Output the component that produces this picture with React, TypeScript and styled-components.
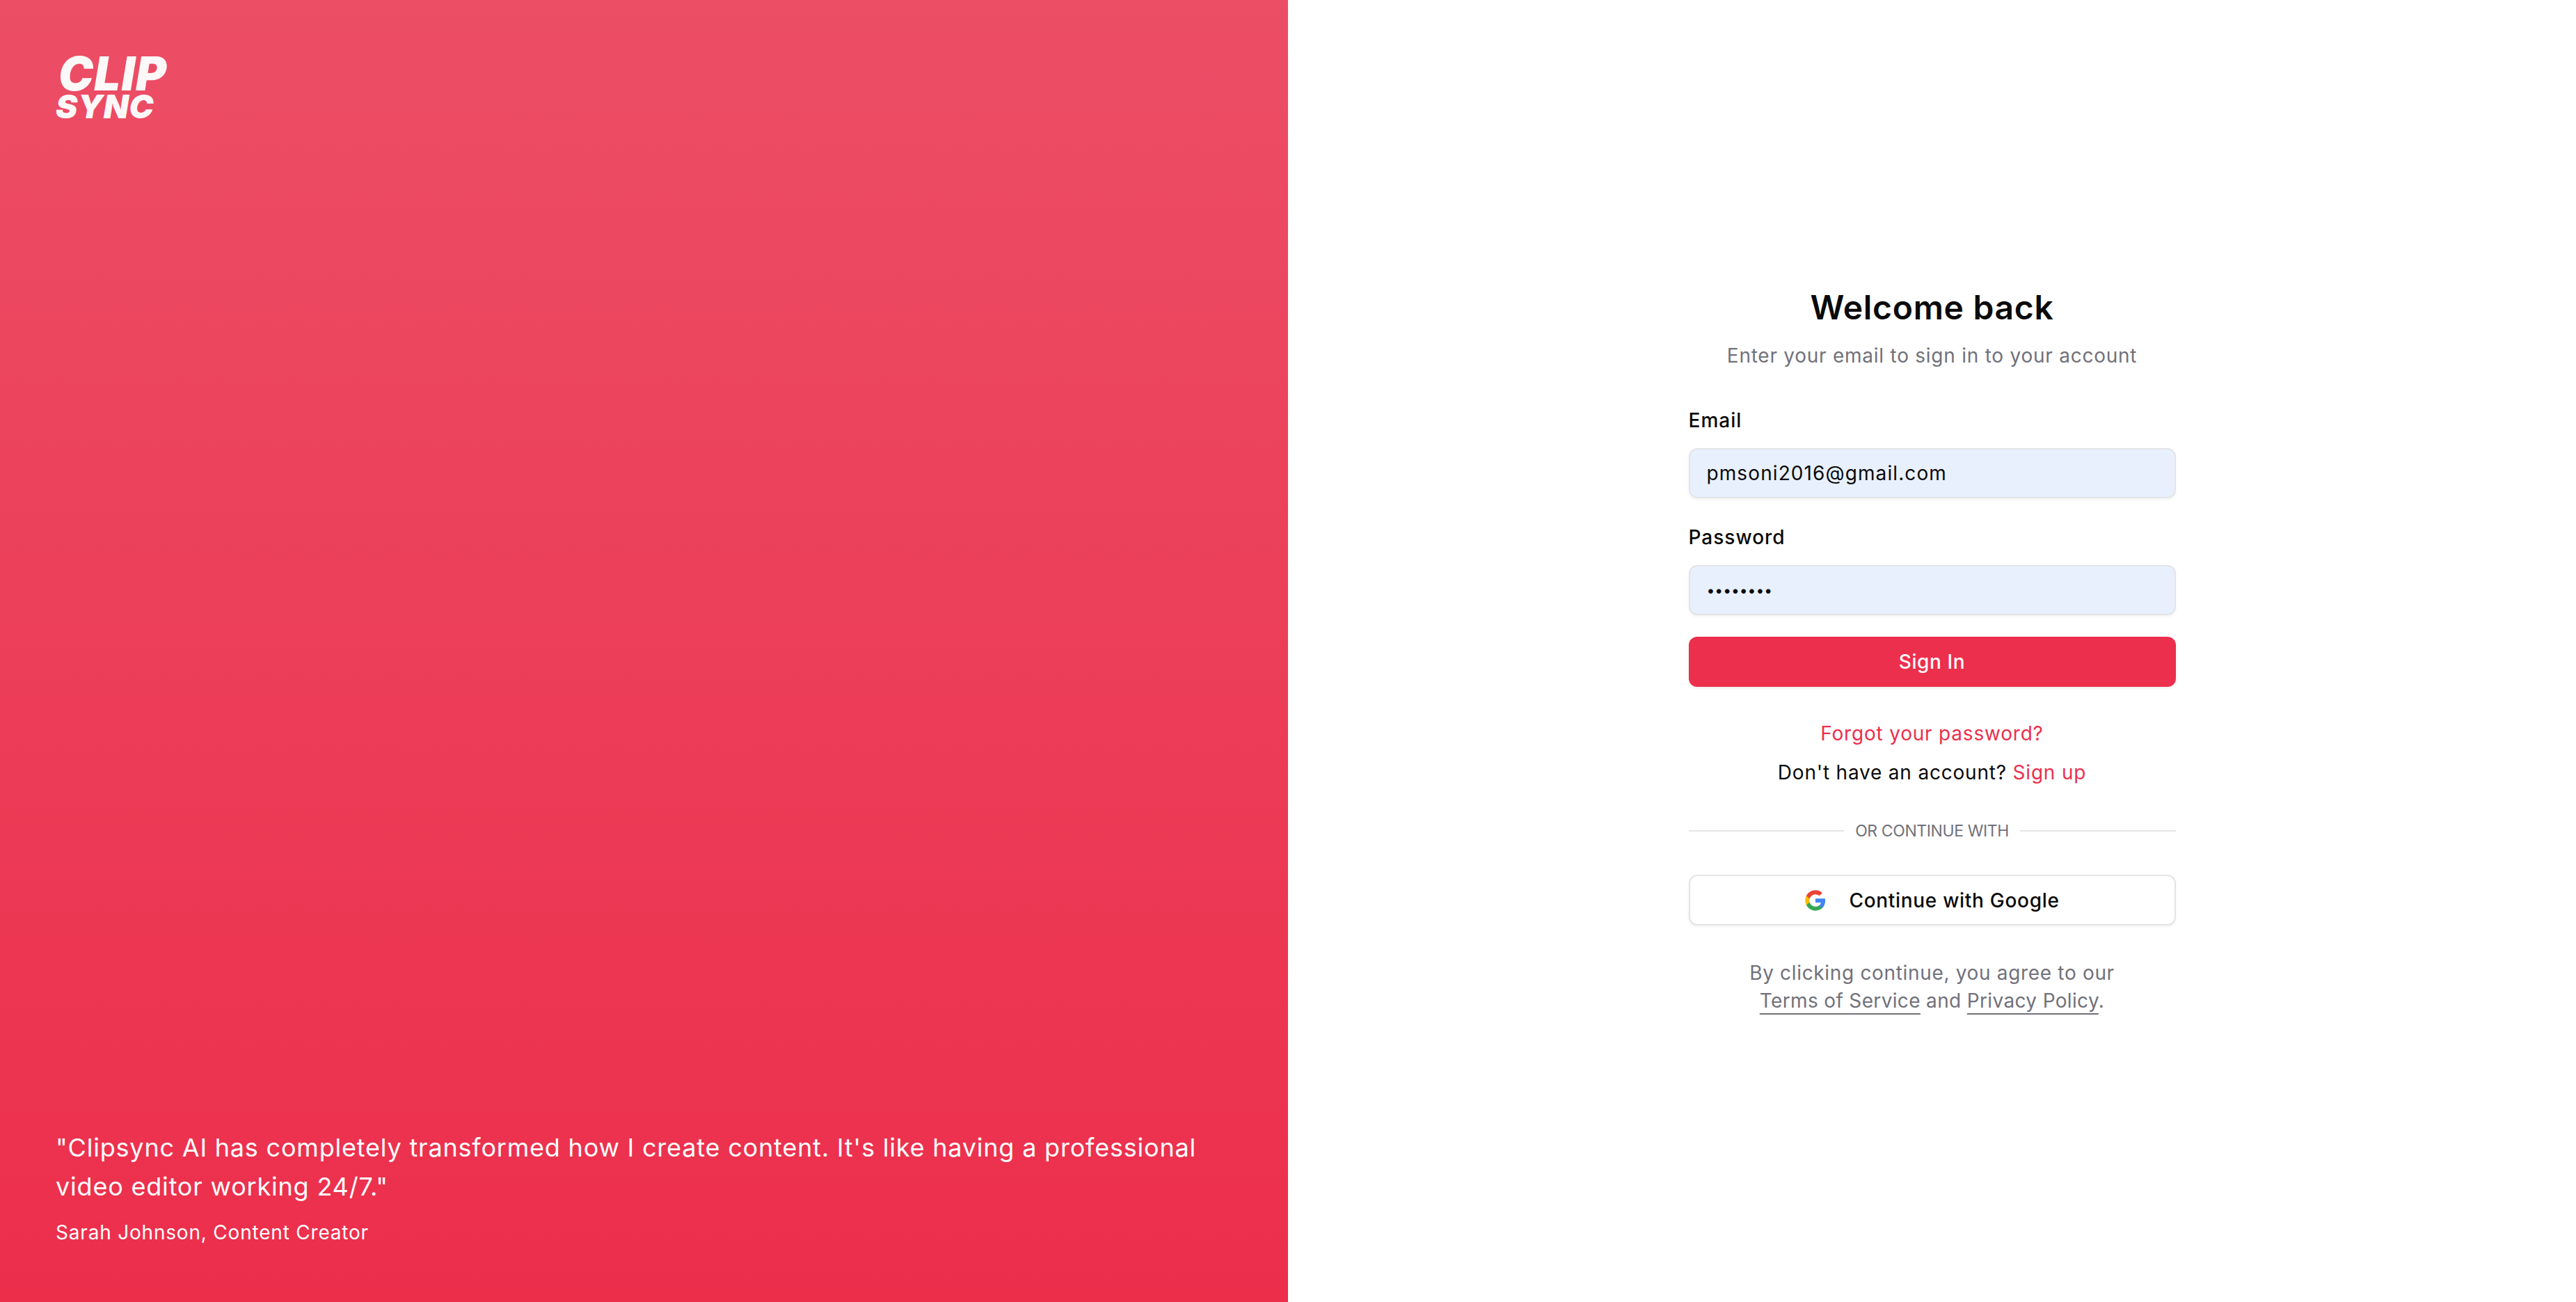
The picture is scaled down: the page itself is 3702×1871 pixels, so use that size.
import styled, { createGlobalStyle } from 'styled-components';

const FONT = `'Inter', 'Noto Sans', sans-serif`;
const RED = '#ec2f4c';
const GREY = '#71717a';

const GlobalStyle = createGlobalStyle`
  html, body {
    margin: 0;
    padding: 0;
    background: #fff;
  }
  * {
    box-sizing: border-box;
  }
`;

const Page = styled.main`
  display: grid;
  grid-template-columns: 1851px 1851px;
  width: 3702px;
  height: 1871px;
  font-family: ${FONT};
`;

const Hero = styled.section`
  display: flex;
  flex-direction: column;
  justify-content: space-between;
  padding: 81px 80px 80px;
  background: linear-gradient(180deg, #ec4e66 0%, #ec2e4b 100%);
  color: #fff;
`;

const Logo = styled.div`
  display: flex;
  flex-direction: column;
  gap: 2px;
  width: 170px;
  font-weight: 900;
  font-style: italic;
  color: #fcf8f8;
`;

const LogoTop = styled.span`
  padding-left: 4px;
  font-size: 67px;
  line-height: 50px;
  letter-spacing: 1.2px;
`;

const LogoBottom = styled.span`
  font-size: 47px;
  line-height: 40px;
  letter-spacing: 0.5px;
`;

const Testimonial = styled.blockquote`
  display: flex;
  flex-direction: column;
  gap: 18px;
  margin: 0;
`;

const Quote = styled.p`
  margin: 0;
  font-size: 36px;
  line-height: 56px;
  letter-spacing: 0.8px;
`;

const Author = styled.footer`
  font-size: 28px;
  line-height: 40px;
  letter-spacing: 0.8px;
`;

const Side = styled.section`
  display: flex;
  justify-content: center;
  padding-top: 410px;
`;

const Form = styled.form`
  display: flex;
  flex-direction: column;
  width: 700px;
`;

const Title = styled.h1`
  margin: 0;
  font-size: 48px;
  line-height: 64px;
  font-weight: 600;
  letter-spacing: 0.7px;
  text-align: center;
  color: #0a0a0a;
`;

const Subtitle = styled.p`
  margin: 17px 0 0;
  font-size: 28px;
  line-height: 40px;
  letter-spacing: 0.75px;
  text-align: center;
  color: ${GREY};
`;

const Field = styled.div<{ $top: number }>`
  display: flex;
  flex-direction: column;
  gap: 26px;
  margin-top: ${({ $top }) => $top}px;
`;

const Label = styled.label`
  font-size: 28px;
  line-height: 28px;
  font-weight: 500;
  letter-spacing: 1px;
  color: #0a0a0a;
`;

const Input = styled.input<{ $masked?: boolean }>`
  height: 72px;
  padding: 0 24px;
  border: 2px solid #e4e4e7;
  border-radius: 12px;
  background: #e8f0fe;
  box-shadow: 0 2px 4px rgba(0, 0, 0, 0.05);
  font-family: ${FONT};
  font-size: ${({ $masked }) => ($masked ? '21px' : '28px')};
  letter-spacing: ${({ $masked }) => ($masked ? '0' : '1.1px')};
  color: #0a0a0a;
  outline: none;
`;

const Submit = styled.button`
  height: 72px;
  margin-top: 31px;
  border: 0;
  border-radius: 12px;
  background: ${RED};
  box-shadow: 0 2px 4px rgba(0, 0, 0, 0.08);
  font-family: ${FONT};
  font-size: 28px;
  font-weight: 500;
  letter-spacing: 0.6px;
  color: #fcfcfc;
`;

const Links = styled.div`
  display: flex;
  flex-direction: column;
  gap: 16px;
  margin-top: 47px;
  font-size: 28px;
  line-height: 40px;
  letter-spacing: 0.8px;
  text-align: center;
  color: #0a0a0a;
`;

const RedLink = styled.a`
  color: ${RED};
`;

const Divider = styled.div`
  display: flex;
  align-items: center;
  gap: 16px;
  margin-top: 48px;
  font-size: 23px;
  line-height: 32px;
  letter-spacing: -0.4px;
  color: ${GREY};

  &::before,
  &::after {
    content: '';
    flex: 1;
    height: 2px;
    background: #e4e4e7;
  }
`;

const GoogleButton = styled.button`
  display: flex;
  align-items: center;
  justify-content: center;
  gap: 32px;
  height: 73px;
  margin-top: 47px;
  border: 2px solid #e4e4e7;
  border-radius: 12px;
  background: #fff;
  box-shadow: 0 2px 4px rgba(0, 0, 0, 0.05);
  font-family: ${FONT};
  font-size: 28px;
  font-weight: 500;
  letter-spacing: 0.7px;
  color: #0a0a0a;
`;

const GoogleMark = styled.svg`
  width: 32px;
  height: 32px;
`;

const Legal = styled.p`
  margin: 48px 0 0;
  font-size: 28px;
  line-height: 40px;
  letter-spacing: 0.67px;
  text-align: center;
  color: ${GREY};
`;

const LegalRow = styled.span`
  letter-spacing: 0.35px;
`;

const LegalLink = styled.a`
  color: ${GREY};
  text-decoration: underline;
  text-underline-offset: 8px;
  text-decoration-thickness: 2px;
`;

export default function App() {
  return (
    <Page>
      <GlobalStyle />
      <Hero>
        <Logo>
          <LogoTop>CLIP</LogoTop>
          <LogoBottom>SYNC</LogoBottom>
        </Logo>
        <Testimonial>
          <Quote>
            "Clipsync AI has completely transformed how I create content. It's like having a professional video editor
            working 24/7."
          </Quote>
          <Author>Sarah Johnson, Content Creator</Author>
        </Testimonial>
      </Hero>
      <Side>
        <Form onSubmit={(e) => e.preventDefault()}>
          <Title>Welcome back</Title>
          <Subtitle>Enter your email to sign in to your account</Subtitle>
          <Field $top={59}>
            <Label htmlFor="email">Email</Label>
            <Input id="email" type="email" defaultValue="pmsoni2016@gmail.com" />
          </Field>
          <Field $top={42}>
            <Label htmlFor="password">Password</Label>
            <Input id="password" type="password" defaultValue="password" $masked />
          </Field>
          <Submit type="submit">Sign In</Submit>
          <Links>
            <RedLink>Forgot your password?</RedLink>
            <span>
              Don't have an account? <RedLink>Sign up</RedLink>
            </span>
          </Links>
          <Divider>OR CONTINUE WITH</Divider>
          <GoogleButton type="button">
            <GoogleMark viewBox="0 0 24 24">
              <path
                fill="#4285F4"
                d="M22.56 12.25c0-.78-.07-1.53-.2-2.25H12v4.26h5.92c-.26 1.37-1.04 2.53-2.21 3.31v2.77h3.57c2.08-1.92 3.28-4.74 3.28-8.09z"
              />
              <path
                fill="#34A853"
                d="M12 23c2.97 0 5.46-.98 7.28-2.66l-3.57-2.77c-.98.66-2.23 1.06-3.71 1.06-2.86 0-5.29-1.93-6.16-4.53H2.18v2.84C3.99 20.53 7.7 23 12 23z"
              />
              <path
                fill="#FBBC05"
                d="M5.84 14.09c-.22-.66-.35-1.36-.35-2.09s.13-1.43.35-2.09V7.07H2.18C1.43 8.55 1 10.22 1 12s.43 3.45 1.18 4.93l2.85-2.22.81-.62z"
              />
              <path
                fill="#EA4335"
                d="M12 5.38c1.62 0 3.06.56 4.21 1.64l3.15-3.15C17.45 2.09 14.97 1 12 1 7.7 1 3.99 3.47 2.18 7.07l3.66 2.84c.87-2.6 3.3-4.53 6.16-4.53z"
              />
            </GoogleMark>
            Continue with Google
          </GoogleButton>
          <Legal>
            By clicking continue, you agree to our
            <br />
            <LegalRow>
              <LegalLink>Terms of Service</LegalLink> and <LegalLink>Privacy Policy</LegalLink>.
            </LegalRow>
          </Legal>
        </Form>
      </Side>
    </Page>
  );
}
